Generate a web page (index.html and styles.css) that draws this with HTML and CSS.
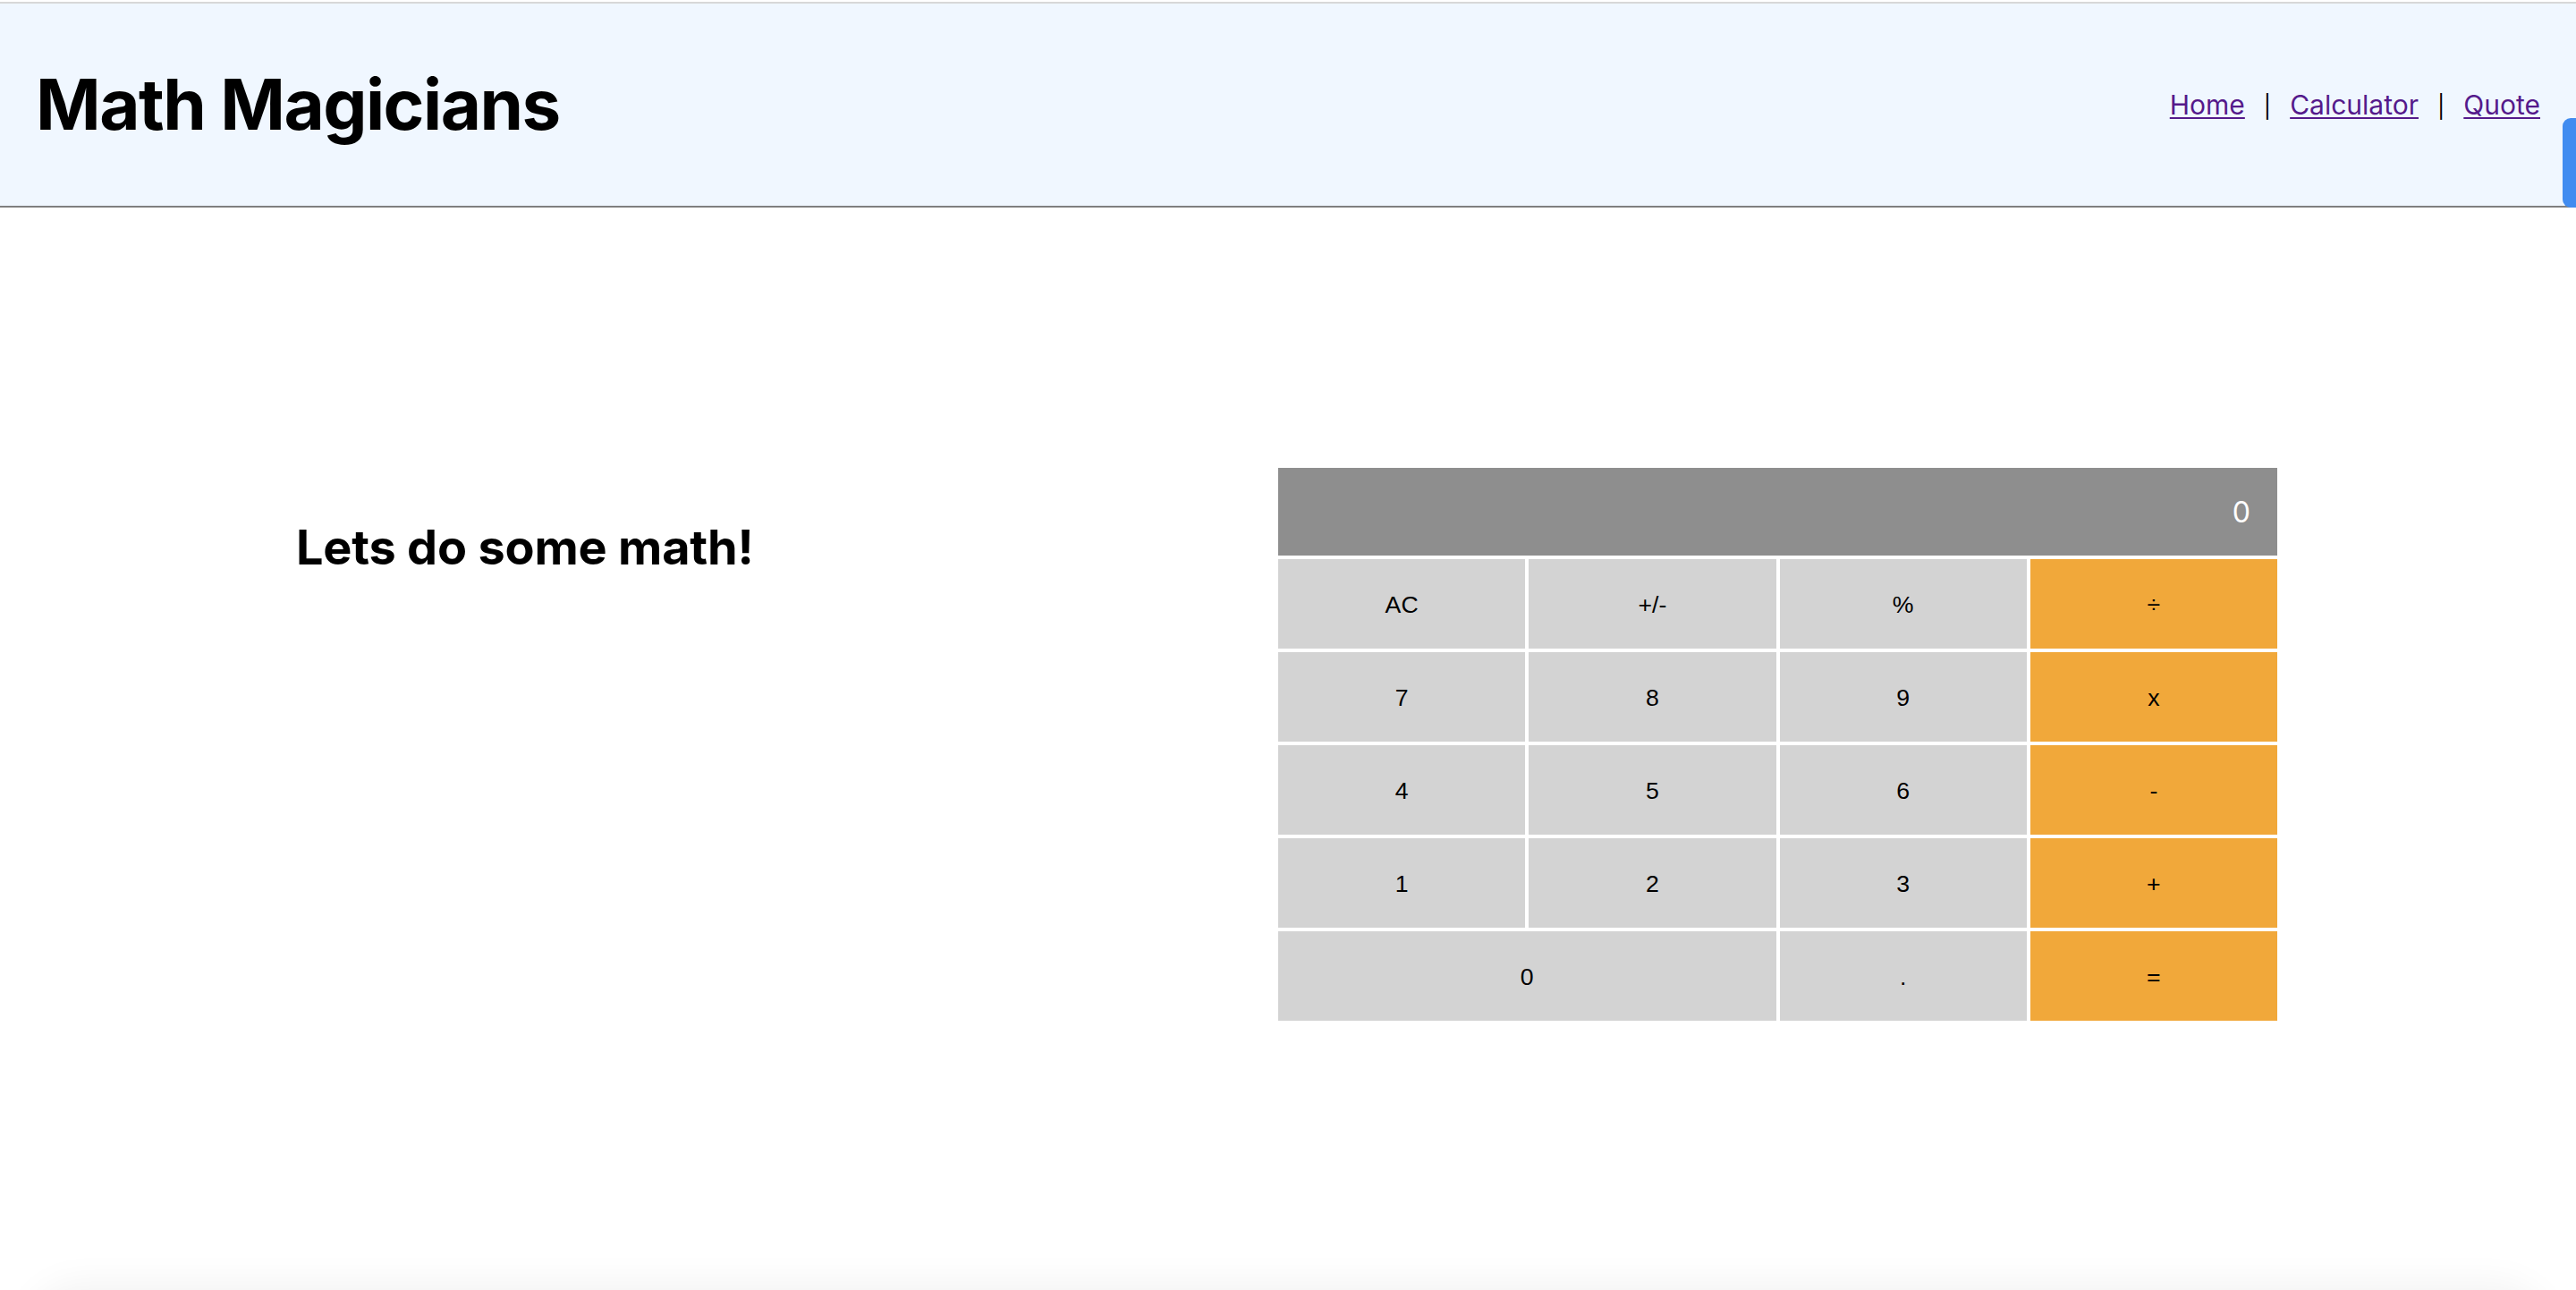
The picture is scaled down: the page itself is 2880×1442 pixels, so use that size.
FILE: index.html
```html
<!DOCTYPE html>
<html lang="en">
<head>
<meta charset="utf-8">
<title>Math Magicians</title>
<link rel="stylesheet" href="styles.css">
</head>
<body>
<header class="site-header">
  <h1 class="brand">Math Magicians</h1>
  <nav class="nav">
    <a href="#" class="nav-link">Home</a>
    <span class="sep">|</span>
    <a href="#" class="nav-link">Calculator</a>
    <span class="sep">|</span>
    <a href="#" class="nav-link">Quote</a>
  </nav>
  <div class="side-tab"></div>
</header>
<main class="main">
  <h2 class="intro">Lets do some math!</h2>
  <div class="calculator">
    <div class="display">0</div>
    <button class="key">AC</button>
    <button class="key">+/-</button>
    <button class="key">%</button>
    <button class="key op">÷</button>
    <button class="key">7</button>
    <button class="key">8</button>
    <button class="key">9</button>
    <button class="key op">x</button>
    <button class="key">4</button>
    <button class="key">5</button>
    <button class="key">6</button>
    <button class="key op">-</button>
    <button class="key">1</button>
    <button class="key">2</button>
    <button class="key">3</button>
    <button class="key op">+</button>
    <button class="key wide">0</button>
    <button class="key">.</button>
    <button class="key op">=</button>
  </div>
</main>
<div class="bottom-shade"></div>
</body>
</html>
```
FILE: styles.css
```css
html, body {
  margin: 0;
  padding: 0;
  background: #ffffff;
}
body {
  font-family: "Inter", "Noto Sans", sans-serif;
  color: #000;
  padding-top: 2px;
  overflow: hidden;
  height: 1440px;
}
.site-header {
  position: relative;
  box-sizing: border-box;
  height: 230px;
  background: #f0f7ff;
  border-top: 2px solid #d8d8d8;
  border-bottom: 2px solid #7f7f7f;
  display: flex;
  align-items: center;
  justify-content: space-between;
  padding: 0 40px 0 40px;
}
.brand {
  margin: 0;
  font-size: 78px;
  font-weight: 700;
  line-height: 1.21;
  letter-spacing: -1.5px;
}
.nav {
  display: flex;
  align-items: baseline;
  font-size: 30px;
  line-height: 1.21;
}
.nav-link {
  color: #551a8b;
  text-decoration: underline;
  text-underline-offset: 3px;
  text-decoration-thickness: 2px;
}
.sep {
  padding: 0 21px;
  color: #000;
  font-size: 25px;
}
.side-tab {
  position: absolute;
  right: 0;
  top: 128px;
  width: 15px;
  height: 100px;
  background: #418cf0;
  border-radius: 9px 0 0 9px;
}
.main {
  display: flex;
  justify-content: space-between;
  align-items: flex-start;
  padding: 291px 334px 0 331px;
}
.intro {
  margin: 56px 0 0 0;
  font-size: 54px;
  font-weight: 700;
  line-height: 1.21;
  letter-spacing: -0.2px;
}
.calculator {
  width: 1117px;
  display: grid;
  grid-template-columns: repeat(4, 1fr);
  grid-template-rows: 98px repeat(5, 100px);
  gap: 4px;
  background: #ffffff;
}
.display {
  grid-column: 1 / -1;
  background: #8e8e8e;
  color: #ffffff;
  font-family: "Inter", "Noto Sans", sans-serif;
  font-size: 32px;
  display: flex;
  align-items: center;
  justify-content: flex-end;
  padding-right: 30px;
}
.key {
  border: none;
  margin: 0;
  padding: 2px 0 0 0;
  background: #d3d3d3;
  color: #000;
  font-family: "Liberation Sans", Arial, sans-serif;
  font-size: 26.67px;
}
.key.op {
  background: #f1a83a;
}
.key.wide {
  grid-column: span 2;
}
.bottom-shade {
  position: fixed;
  left: 30px;
  right: 30px;
  bottom: -120px;
  height: 120px;
  border-radius: 60px;
  box-shadow: 0 -8px 40px rgba(0, 0, 0, 0.05);
}
```
